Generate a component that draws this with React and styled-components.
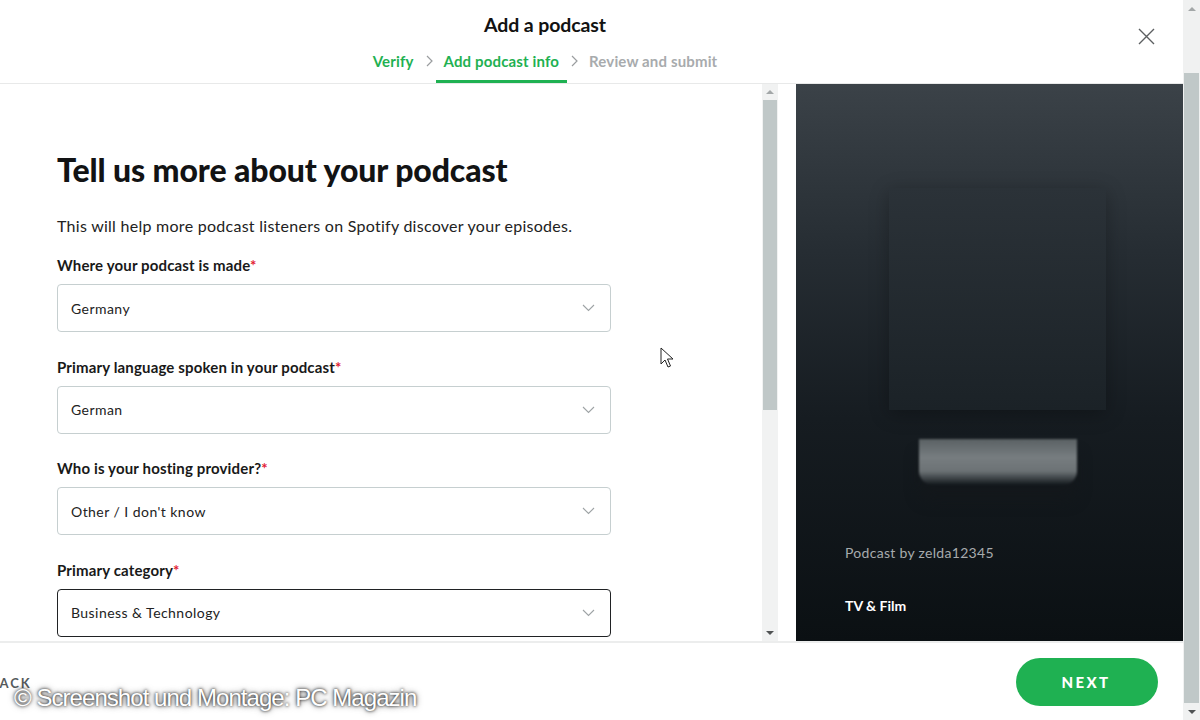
import React from 'react';
import styled, { createGlobalStyle } from 'styled-components';

const GlobalStyle = createGlobalStyle`
    html, body {
        margin: 0;
        padding: 0;
        background: #fff;
    }
    body {
        font-family: Lato, "Noto Sans", "Liberation Sans", sans-serif;
        color: #181818;
        -webkit-font-smoothing: antialiased;
    }
`;

const green = '#1fb152';

const Screen = styled.div`
    position: relative;
    display: flex;
    width: 1200px;
    height: 720px;
    overflow: hidden;
`;

const Modal = styled.div`
    flex: 1;
    display: flex;
    flex-direction: column;
    min-width: 0;
`;

/* header */

const Header = styled.header`
    position: relative;
    height: 83px;
    border-bottom: 1px solid #e8e9e9;
    display: flex;
    flex-direction: column;
    align-items: center;
    padding-right: 93px;
    flex-shrink: 0;
`;

const Title = styled.h1`
    margin: 13px 0 0;
    font-size: 19.5px;
    line-height: 24px;
    font-weight: 700;
    letter-spacing: -0.1px;
    color: #121212;
`;

const Steps = styled.nav`
    display: flex;
    align-items: flex-start;
    margin-top: 14px;
`;

const Step = styled.div`
    font-size: 15px;
    font-weight: 700;
    line-height: 20px;
    letter-spacing: 0.15px;
    padding: 0 8px 9px;
    color: ${p => (p.$state === 'todo' ? '#a8abad' : green)};
    border-bottom: 3px solid ${p => (p.$state === 'current' ? green : 'transparent')};
`;

const StepArrow = styled.svg`
    width: 10px;
    height: 20px;
    margin: 0 2px;
    stroke: #9a9d9f;
    stroke-width: 1.2;
    fill: none;
`;

const CloseButton = styled.button`
    position: absolute;
    top: 27px;
    right: 27px;
    width: 19px;
    height: 19px;
    padding: 0;
    border: 0;
    background: none;
    cursor: pointer;
    svg {
        display: block;
        stroke: #5c5f61;
        stroke-width: 1.4;
    }
`;

/* body */

const Main = styled.main`
    flex: 1;
    display: flex;
    min-height: 0;
`;

const FormPane = styled.section`
    flex: 1;
    overflow: hidden;
    padding: 67px 0 0 57px;
`;

const Heading = styled.h2`
    margin: 0;
    font-size: 32px;
    line-height: 38px;
    font-weight: 900;
    letter-spacing: -0.1px;
    color: #121314;
`;

const Lead = styled.p`
    margin: 26px 0 18px;
    font-size: 16px;
    line-height: 22px;
    letter-spacing: 0.27px;
    color: #222;
`;

const Field = styled.div`
    width: 554px;
    margin-bottom: 24.5px;
`;

const Label = styled.label`
    display: block;
    font-size: 15px;
    line-height: 20px;
    font-weight: 700;
    letter-spacing: 0.15px;
    color: #191919;
    margin-bottom: 9px;
    span {
        color: #e22134;
    }
`;

const Select = styled.div`
    box-sizing: border-box;
    height: 48px;
    display: flex;
    align-items: center;
    justify-content: space-between;
    padding: 0 15px 0 13px;
    border: 1px solid ${p => (p.$focused ? '#202224' : '#c6cfd0')};
    border-radius: 4px;
    font-size: 14px;
    color: #222;
    letter-spacing: 0.45px;
    svg {
        stroke: #9ea3a5;
        stroke-width: 1.1;
        fill: none;
    }
`;

const Scrollbar = styled.div`
    width: 16px;
    display: flex;
    flex-direction: column;
    background: #f1f2f2;
    flex-shrink: 0;
`;

const ScrollArrow = styled.div`
    height: ${p => p.$size || 16}px;
    display: flex;
    align-items: center;
    justify-content: center;
    flex-shrink: 0;
    &::after {
        content: '';
        border-left: 4px solid transparent;
        border-right: 4px solid transparent;
        ${p => (p.$down ? 'border-top: 4px solid #505354;' : 'border-bottom: 4px solid #a3a7a8;')}
    }
`;

const ScrollThumb = styled.div`
    height: ${p => p.$size}px;
    margin: 0 1px;
    background: #c0c8c8;
    flex-shrink: 0;
`;

const ScrollRest = styled.div`
    flex: ${p => (p.$size ? `0 0 ${p.$size}px` : 1)};
`;

const Gap = styled.div`
    width: 18px;
    flex-shrink: 0;
`;

const Preview = styled.aside`
    width: 387px;
    flex-shrink: 0;
    box-sizing: border-box;
    padding: 104px 33px 0 49px;
    background: linear-gradient(180deg, #3b4248 0%, #262d33 30%, #161c21 60%, #0b1013 100%);
    display: flex;
    flex-direction: column;
`;

const Artwork = styled.div`
    align-self: center;
    width: 217px;
    height: 222px;
    background: linear-gradient(180deg, #2b3238 0%, #1b2227 100%);
    box-shadow: 0 4px 18px rgba(0, 0, 0, 0.28);
`;

const NameBlur = styled.div`
    align-self: center;
    width: 158px;
    height: 46px;
    margin-top: 29px;
    background: linear-gradient(180deg, #5a6164 0%, #777d80 40%, #6c7275 70%, rgba(40, 46, 50, 0) 100%);
    border-radius: 0 0 14px 14px;
    filter: blur(1.2px);
    box-shadow: 0 16px 14px rgba(20, 24, 27, 0.6);
`;

const Author = styled.div`
    margin-top: 58px;
    font-size: 14px;
    line-height: 20px;
    color: #a7abad;
    letter-spacing: 0.3px;
`;

const Category = styled.div`
    margin-top: 33px;
    font-size: 14px;
    line-height: 20px;
    font-weight: 700;
    color: #fff;
`;

/* footer */

const Footer = styled.footer`
    height: 79px;
    flex-shrink: 0;
    border-top: 2px solid #eceded;
    box-sizing: border-box;
    display: flex;
    align-items: center;
    justify-content: space-between;
    padding: 0 25px 0 0;
`;

const BackButton = styled.button`
    margin-left: -11px;
    margin-top: 2px;
    border: 0;
    background: none;
    padding: 0;
    font-family: inherit;
    font-size: 13px;
    font-weight: 700;
    letter-spacing: 2px;
    color: #555a5c;
`;

const NextButton = styled.button`
    width: 142px;
    height: 48px;
    border: 0;
    border-radius: 24px;
    background: ${green};
    color: #fff;
    font-family: inherit;
    font-size: 15px;
    font-weight: 900;
    letter-spacing: 2.4px;
    padding-left: 4px;
`;

const PageScrollbar = styled(Scrollbar)`
    width: 17px;
    background: #f0f1f1;
`;

const Pointer = styled.svg`
    position: absolute;
    left: 660px;
    top: 347px;
`;

const Credit = styled.div`
    position: absolute;
    left: 14px;
    top: 683px;
    font-family: "Liberation Sans", Arial, sans-serif;
    font-size: 24px;
    line-height: 30px;
    letter-spacing: -0.95px;
    color: #fff;
    text-shadow: 0 0 3px rgba(0, 0, 0, 0.95), 0 0 6px rgba(0, 0, 0, 0.6);
    white-space: nowrap;
`;

const fields = [
    { label: 'Where your podcast is made', value: 'Germany' },
    { label: 'Primary language spoken in your podcast', value: 'German' },
    { label: 'Who is your hosting provider?', value: "Other / I don't know" },
    { label: 'Primary category', value: 'Business & Technology', focused: true },
];

const Chevron = () => (
    <svg width="13" height="8" viewBox="0 0 13 8">
        <path d="M1 1l5.5 5.5L12 1" />
    </svg>
);

const Arrow = () => (
    <StepArrow viewBox="0 0 10 20">
        <path d="M3 5l5 5-5 5" />
    </StepArrow>
);

const App = () => (
    <Screen>
        <GlobalStyle />
        <Modal>
            <Header>
                <Title>Add a podcast</Title>
                <Steps>
                    <Step $state="done">Verify</Step>
                    <Arrow />
                    <Step $state="current">Add podcast info</Step>
                    <Arrow />
                    <Step $state="todo">Review and submit</Step>
                </Steps>
                <CloseButton aria-label="Close">
                    <svg width="19" height="19" viewBox="0 0 19 19">
                        <path d="M2 2l15 15M17 2L2 17" />
                    </svg>
                </CloseButton>
            </Header>

            <Main>
                <FormPane>
                    <Heading>Tell us more about your podcast</Heading>
                    <Lead>This will help more podcast listeners on Spotify discover your episodes.</Lead>
                    {fields.map(f => (
                        <Field key={f.label}>
                            <Label>{f.label}<span>*</span></Label>
                            <Select $focused={f.focused}>
                                {f.value}
                                <Chevron />
                            </Select>
                        </Field>
                    ))}
                </FormPane>
                <Scrollbar>
                    <ScrollArrow />
                    <ScrollThumb $size={310} />
                    <ScrollRest />
                    <ScrollArrow $down />
                </Scrollbar>
                <Gap />
                <Preview>
                    <Artwork />
                    <NameBlur />
                    <Author>Podcast by zelda12345</Author>
                    <Category>TV &amp; Film</Category>
                </Preview>
            </Main>

            <Footer>
                <BackButton>BACK</BackButton>
                <NextButton>NEXT</NextButton>
            </Footer>
        </Modal>

        <PageScrollbar>
            <ScrollArrow $size={17} />
            <ScrollRest $size={56} />
            <ScrollThumb $size={630} />
            <ScrollArrow $size={17} $down />
        </PageScrollbar>

        <Pointer width="14" height="21" viewBox="0 0 14 21">
            <path d="M1 1v16l4-4 3 7 2.5-1-3-7h5.5z" fill="#fff" stroke="#222" strokeWidth="1" strokeLinejoin="round" />
        </Pointer>

        <Credit>© Screenshot und Montage: PC Magazin</Credit>
    </Screen>
);

export default App;
